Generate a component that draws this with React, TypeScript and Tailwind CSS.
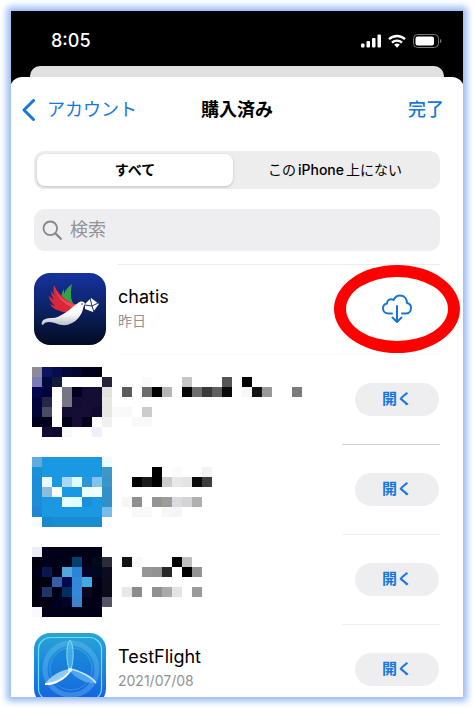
import type { ReactNode } from "react";

const W = "#ffffff";
const _ = "";

type Mosaic = { icon: string[][]; text: [number, number, string][] };

// Each cell is a 10px block; icon rows start at column 0, text blocks are [column, row, colour].
const mosaicNavy: Mosaic = {
  icon: [
    ["#8b8b9c", "#0b1560", "#060d4d", "#02083a", "#02052e", "#00001c", "#00001a"],
    ["#7c7cb5", "#01093f", "#141a3c", W, W, W, W, "#28253a"],
    ["#00074d", "#00043a", W, "#757583", "#00001d", "#150d33", "#150d33", "#e3e3de"],
    ["#01063a", "#24264a", W, "#757583", "#120b34", "#150d33", "#150d33", "#e8e8e3"],
    ["#00053a", "#4b4b66", W, "#130d33", "#150d33", "#170f33", "#100a30", "#e8e8e3"],
    ["#00001c", "#00001c", W, "#03001a", "#150d33", "#07001e", W, "#f0f0f2"],
    [_, "#120b33", "#0c0830", "#f8f8ff", _, _, "#f0eefa"],
  ],
  text: [
    [11, 1, "#fafafa"], [15, 1, "#c6c6c6"], [19, 1, "#555555"], [21, 1, "#000000"],
    [9, 2, "#5c5c5c"], [11, 2, "#6c6c6c"], [12, 2, "#000000"], [13, 2, "#b4b4b4"],
    [15, 2, "#050505"], [16, 2, "#6e6e6e"], [17, 2, "#3a3a3a"], [18, 2, "#5f5f5f"],
    [19, 2, "#0a0a0a"], [21, 2, "#f7f7f7"], [22, 2, "#141414"], [23, 2, "#999999"],
    [26, 2, "#7b7b7b"], [8, 4, "#fafafa"], [9, 4, "#f9f9f9"], [11, 4, "#cccccc"],
    [10, 5, "#f9f9f9"], [11, 5, "#f9f9f9"],
  ],
};

const B = "#1a98e2";
const mosaicBlue: Mosaic = {
  icon: [
    ["#62a9dc", B, B, B, B, B, B, "#eefcff"],
    ["#1a90d8", B, B, B, B, B, B, "#3c98c8"],
    ["#1a8fd8", "#eafcff", B, "#a8d8f5", "#e0feff", "#2a96d8", "#80c4ee", "#3a96c8"],
    ["#1a8fd8", "#8abce0", "#fafaff", B, B, "#eafcff", "#f0fcff", "#3290c8"],
    ["#1a8fd8", B, B, "#eaffff", "#e0feff", "#1a90dc", B, "#3290c8"],
    ["#2088d0", B, B, B, B, B, B, "#74bcec"],
    ["#f8feff", "#1a88cc", "#1a8cd2", "#1a8cd2", "#1a8cd2", "#1a8cd2", "#1a8cd2"],
  ],
  text: [
    [12, 1, "#000000"], [14, 1, "#fbfbfb"], [17, 1, "#f4f4f4"],
    [10, 2, "#000000"], [11, 2, "#1a1a1a"], [12, 2, "#000000"], [13, 2, "#cccccc"],
    [14, 2, "#e8e8e8"], [15, 2, "#e4e4e4"], [16, 2, "#0a0a0a"], [17, 2, "#3c3c3c"],
    [9, 4, "#f6f6f6"], [10, 4, "#8e8e8e"], [12, 4, "#949494"], [13, 4, "#9c9c9c"],
    [14, 4, "#dadadf"], [15, 4, "#d4d4d8"], [16, 4, "#b0b0b0"],
    [10, 5, "#f9f9f9"], [11, 5, "#f9f9f9"], [13, 5, "#f7f7f7"], [14, 5, "#f5f5f5"],
  ],
};

const N = "#000018";
const mosaicDark: Mosaic = {
  icon: [
    ["#e8eef4", N, N, N, N, N, N],
    ["#000010", N, N, N, "#053f70", N, "#000a18", "#2c2c3c"],
    [N, "#0a1850", N, "#50a8dc", "#2a84d8", "#08002a", "#000820", "#0c0c20"],
    ["#000010", "#000010", "#3060a8", "#000850", "#3488d8", "#44a8e4", N, "#080c1c"],
    ["#000010", "#203468", N, "#003060", "#3488d8", "#0a0820", "#000010", "#0a0c1c"],
    ["#000010", "#000010", "#000020", "#000428", "#3c84cc", N, N, "#525664"],
    ["#f8faff", N, N, N, N, N, N],
  ],
  text: [
    [9, 1, "#141414"], [10, 1, "#f8f8f8"], [14, 1, "#000000"], [15, 1, "#bfbfbf"],
    [11, 2, "#969696"], [12, 2, "#929292"], [13, 2, "#282828"], [15, 2, "#000000"],
    [16, 2, "#939393"], [9, 4, "#e8e8e8"], [10, 4, "#8c8c8c"], [12, 4, "#919191"],
    [13, 4, "#aaaaaa"], [14, 4, "#e4e4e4"], [16, 4, "#9a9a9a"],
  ],
};

function MosaicArt({ data }: { data: Mosaic }) {
  return (
    <svg aria-hidden="true" className="mt-3 -ml-0.5 h-[70px] w-[280px] shrink-0" viewBox="0 0 280 70" shapeRendering="crispEdges">
      {data.icon.map((row, y) =>
        row.map((fill, x) => fill && <rect key={`${x}-${y}`} x={x * 10} y={y * 10} width="10" height="10" fill={fill} />)
      )}
      {data.text.map(([x, y, fill]) => (
        <rect key={`t${x}-${y}`} x={x * 10} y={y * 10} width="10" height="10" fill={fill} />
      ))}
    </svg>
  );
}

function ChatisIcon() {
  return (
    <svg aria-hidden="true" className="mt-2 size-[72px] shrink-0" viewBox="0 0 72 72">
      <defs>
        <linearGradient id="chatisBg" x1="0" y1="0" x2="0" y2="1">
          <stop offset="0" stopColor="#1533a0" />
          <stop offset="0.5" stopColor="#0c2263" />
          <stop offset="1" stopColor="#020b20" />
        </linearGradient>
        <linearGradient id="dove" x1="0" y1="0" x2="0" y2="1">
          <stop offset="0.5" stopColor="#ffffff" />
          <stop offset="1" stopColor="#b9bec6" />
        </linearGradient>
      </defs>
      <rect width="72" height="72" rx="16" fill="url(#chatisBg)" />
      <path d="M38 11c-4 3-7 6-8 10l0-5c-4 6-3 12 2 16l9 1c-3-4-4-7-4-11 0-4 0-7 1-11z" fill="#35a047" />
      <path d="M20 12c-1 4-1 8 1 11l-4-5c0 3 1 6 3 9l-5-4c0 4 3 7 6 10l-5-2c2 4 6 6 10 7 4 2 9 2 13-1 2-2 3-4 4-5-6-2-10-4-14-8-4-3-7-7-9-12z" fill="#d8263b" />
      <path d="M20 12c3 9 7 14 14 17l9 3-4 3c-10-4-17-12-19-23z" fill="#ef4455" />
      <path d="M51 31c-1-3-4-3-7-1-5 3-8 7-13 10-5 3-9 5-13 5-5 0-9 1-10 4-1 2 0 3 1 3 1-2 3-3 6-3 6 0 10 4 18 3 8-2 14-8 16-16 0-2 1-3 2-5z" fill="url(#dove)" />
      <path d="M51 31l6-6 8 6-6 8-8-3z" fill="#ffffff" />
      <path d="M51 32l7 1 6-3M58 33l-2-8M58 33l2 6" fill="none" stroke="#17305f" strokeWidth="1" />
      <circle cx="48" cy="31" r="0.8" fill="#203464" />
    </svg>
  );
}

function TestFlightIcon() {
  return (
    <svg aria-hidden="true" className="mt-2 size-[72px] shrink-0" viewBox="0 0 72 72">
      <defs>
        <linearGradient id="tfBg" x1="0" y1="0" x2="0" y2="1">
          <stop offset="0" stopColor="#2ba4d4" />
          <stop offset="0.4" stopColor="#1d8ade" />
          <stop offset="1" stopColor="#145ce0" />
        </linearGradient>
        <linearGradient id="blade" x1="0" y1="0" x2="1" y2="1">
          <stop offset="0" stopColor="#8fd4f4" />
          <stop offset="1" stopColor="#e6f5ff" />
        </linearGradient>
      </defs>
      <rect width="72" height="72" rx="16" fill="url(#tfBg)" />
      <rect x="4.500" y="4.500" width="63" height="63" rx="12" fill="none" stroke="#67e2f2" strokeWidth="1.200" />
      <circle cx="37" cy="36" r="26" fill="none" stroke="#7cc7f2" strokeOpacity="0.35" strokeWidth="5" />
      <circle cx="37" cy="36" r="21" fill="#1676d8" fillOpacity="0.45" stroke="#63bce8" strokeOpacity="0.4" strokeWidth="1" />
      <path d="M36 7c-4 5-4 20-1 29h2c3-8 3-24-1-29z" fill="#55b8e9" fillOpacity="0.7" stroke="#73e2f2" strokeWidth="1" />
      <path d="M35 36c-8 1-20 8-24 15 8 1 20-5 25-13z" fill="url(#blade)" fillOpacity="0.75" />
      <path d="M11 51c8 1 20-5 25-13" fill="none" stroke="#ffffff" strokeWidth="2" />
      <path d="M37 36c8 1 22 8 25 14-9 1-20-4-26-12z" fill="#62b0f1" fillOpacity="0.8" />
      <path d="M37 36c9 2 21 8 25 14" fill="none" stroke="#c8e7fb" strokeWidth="1.500" />
      <circle cx="36" cy="37" r="2" fill="#ddffff" />
    </svg>
  );
}

function OpenButton() {
  return (
    <div className="pt-[10px]">
      <button type="button" className="mt-[18px] mr-px h-[33px] w-[84px] rounded-full bg-[#eeeef0] text-[15px] font-bold text-[#1478e0]">
        開く
      </button>
    </div>
  );
}

function DownloadButton() {
  return (
    <div className="relative mr-px flex h-[88px] w-[84px] items-center justify-center">
      <button type="button" aria-label="ダウンロード" className="flex items-center justify-center">
        <svg className="h-[30px] w-8" viewBox="0 0 32 30" fill="none" stroke="#1a74d8" strokeWidth="2" strokeLinecap="round" strokeLinejoin="round">
          <path d="M11 19.500H7.500C4.300 19.500 2 17.300 2 14.500c0-2.500 1.600-4.500 4-5 0-2.600 1.800-4.300 4-4.300 1 0 1.900.3 2.600.8C13.800 3.400 16 1.500 19 1.500c4.200 0 7 3.200 7 7.500 2.500.4 4 2.500 4 5 0 3.200-2.300 5.500-5.200 5.500H21" />
          <path d="M16 12v15.500M11.500 23.500L16 28 20.500 23.500" />
        </svg>
      </button>
      <div className="pointer-events-none absolute -inset-x-[21px] inset-y-0 rounded-[50%] border-[12px] border-[#fe0000]" />
    </div>
  );
}

function AppInfo({ icon, name, date }: { icon: ReactNode; name: string; date: string }) {
  return (
    <div className="flex gap-3">
      {icon}
      <div className="pt-5">
        <h2 className="text-lg leading-6 text-black">{name}</h2>
        <p className="text-sm leading-6 text-[#929294]">{date}</p>
      </div>
    </div>
  );
}

function Row({ info, action, line }: { info: ReactNode; action: ReactNode; line: string }) {
  return (
    <li className="flex h-[90px] flex-col">
      <div className={`h-px shrink-0 self-end ${line}`} />
      <div className="flex items-start justify-between">
        {info}
        {action}
      </div>
    </li>
  );
}

export default function App() {
  return (
    <div className="h-screen bg-white p-[11px] font-[Inter,'Noto_Sans_CJK_JP',sans-serif]">
      <div className="flex h-full flex-col overflow-hidden bg-black shadow-[0_0_7px_4px_#94b6f2]">
        <header className="flex h-[55px] shrink-0 items-center justify-between pt-1 pr-[21px] pl-10 text-white">
          <time className="text-lg font-medium">8:05</time>
          <div className="flex items-center gap-[7px]">
            <svg aria-hidden="true" className="h-[14px] w-5" viewBox="0 0 20 14" fill="#ffffff">
              <rect x="0" y="9.500" width="3.500" height="4" rx="1" />
              <rect x="5.500" y="7" width="3.500" height="6.500" rx="1" />
              <rect x="11" y="4" width="3.500" height="9.500" rx="1" />
              <rect x="16.500" y="0.500" width="3.500" height="13" rx="1" />
            </svg>
            <svg aria-hidden="true" className="h-[14px] w-[18px]" viewBox="0 0 18 14" fill="none" stroke="#ffffff" strokeWidth="2.400">
              <path d="M1 5.200a11.500 11.500 0 0 1 16 0M4 8.600a7.200 7.200 0 0 1 10 0" />
              <path d="M6.200 10.800a4 4 0 0 1 5.600 0L9 13.800z" fill="#ffffff" stroke="none" />
            </svg>
            <svg aria-hidden="true" className="h-[14px] w-[29px]" viewBox="0 0 29 14">
              <rect x="0.500" y="0.500" width="25" height="13" rx="4" fill="none" stroke="#77777a" />
              <rect x="2.500" y="2.500" width="18.500" height="9" rx="2" fill="#ffffff" />
              <path d="M27 5c2 .7 2 3.300 0 4z" fill="#77777a" />
            </svg>
          </div>
        </header>

        <div className="mx-[19px] h-[11px] shrink-0 rounded-t-[10px] bg-[#e0e0e0]" />

        <main className="-mx-px -mb-1 min-h-0 flex-1 overflow-hidden rounded-t-[12px] bg-white px-6">
          <nav className="-mx-3 grid h-[66px] grid-cols-[1fr_auto_1fr] items-center text-lg text-[#1478e0]">
            <a href="#account" className="flex items-center gap-3">
              <svg aria-hidden="true" className="h-[22px] w-[13px]" viewBox="0 0 13 22" fill="none" stroke="currentColor" strokeWidth="3" strokeLinecap="round" strokeLinejoin="round">
                <path d="M11.500 1.500L2 11l9.500 9.500" />
              </svg>
              アカウント
            </a>
            <h1 className="font-bold text-black">購入済み</h1>
            <button type="button" className="mr-2 justify-self-end font-medium">完了</button>
          </nav>

          <div role="group" aria-label="表示" className="mt-2 grid h-[38px] grid-cols-[49fr_51fr] rounded-[10px] bg-[#ededee] p-[3px] text-sm text-black">
            <button type="button" aria-pressed="true" className="rounded-lg bg-white font-bold shadow-[0_1px_3px_#00000030]">
              すべて
            </button>
            <button type="button" aria-pressed="false">
              この<span className="mx-0.5 font-medium">iPhone</span>上にない
            </button>
          </div>

          <label className="mt-5 flex h-[42px] items-center gap-2 rounded-[11px] bg-[#eeeef0] px-2">
            <svg aria-hidden="true" className="size-5 shrink-0" viewBox="0 0 20 20" fill="none" stroke="#85858a" strokeWidth="1.800" strokeLinecap="round">
              <circle cx="8.300" cy="8.300" r="6.800" />
              <path d="M13.400 13.400l5.400 5.400" strokeWidth="2.200" />
            </svg>
            <input type="text" aria-label="検索" placeholder="検索" className="min-w-0 flex-1 bg-transparent text-lg outline-none placeholder:text-[#929297]" />
          </label>

          <ul className="mt-[13px]">
            <Row line="w-[322px] bg-[#ececec]" info={<AppInfo icon={<ChatisIcon />} name="chatis" date="昨日" />} action={<DownloadButton />} />
            <Row line="w-[322px] bg-[#fafafa]" info={<MosaicArt data={mosaicNavy} />} action={<OpenButton />} />
            <Row line="w-[98px] bg-[#cfcfd1]" info={<MosaicArt data={mosaicBlue} />} action={<OpenButton />} />
            <Row line="w-[98px] bg-[#f0f0f1]" info={<MosaicArt data={mosaicDark} />} action={<OpenButton />} />
            <Row line="w-[98px] bg-[#f0f0f1]" info={<AppInfo icon={<TestFlightIcon />} name="TestFlight" date="2021/07/08" />} action={<OpenButton />} />
          </ul>
        </main>
      </div>
    </div>
  );
}
